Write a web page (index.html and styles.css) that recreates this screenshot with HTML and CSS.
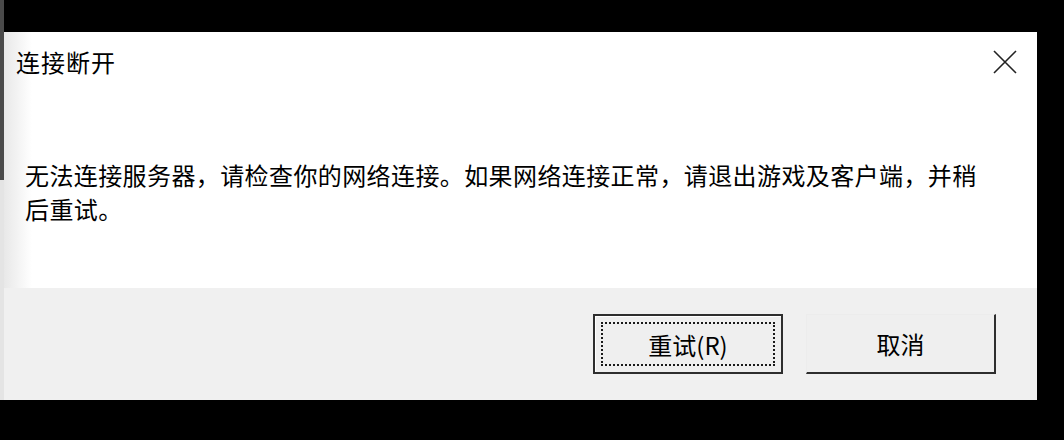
FILE: index.html
```html
<!DOCTYPE html>
<html lang="zh-CN">
<head>
  <meta charset="UTF-8">
  <meta name="viewport" content="width=device-width, initial-scale=1.0">
  <title>连接断开</title>
  <link rel="stylesheet" href="styles.css">
</head>
<body>
  <div class="stage">
    <div class="edge"></div>
    <div class="dialog">
      <div class="content">
        <div class="title-row">
          <span class="title">连接断开</span>
          <button class="close" aria-label="关闭">
            <svg width="24" height="24" viewBox="0 0 24 24">
              <path d="M1 1 L23 23 M23 1 L1 23" stroke="#222" stroke-width="1.6" fill="none"/>
            </svg>
          </button>
        </div>
        <p class="message">无法连接服务器，请检查你的网络连接。如果网络连接正常，请退出游戏及客户端，并稍后重试。</p>
      </div>
      <div class="footer">
        <button class="btn btn-default">重试(R)</button>
        <button class="btn">取消</button>
      </div>
    </div>
  </div>
</body>
</html>
```

FILE: styles.css
```css
html, body {
  margin: 0;
  background: #000;
}
body {
  width: 1064px;
  height: 440px;
  overflow: hidden;
  font-family: "Noto Sans CJK SC", "Noto Sans", sans-serif;
  color: #000;
}
.stage {
  display: flex;
  align-items: flex-start;
}
.edge {
  width: 4px;
  height: 400px;
  background: linear-gradient(to bottom, #4a4a4a 0, #4a4a4a 180px, #e4e4e4 180px);
}
.dialog {
  margin-top: 32px;
  width: 1033px;
  height: 368px;
  display: flex;
  flex-direction: column;
  background: #fff;
}
.content {
  flex: 1;
  background: linear-gradient(to right, #e8e8e8 0, #fff 28px);
}
.title-row {
  display: flex;
  justify-content: space-between;
  align-items: center;
  padding: 14px 20px 0 12px;
  height: 32px;
}
.title {
  font-size: 24px;
  line-height: 32px;
  letter-spacing: 1px;
}
.close {
  border: none;
  background: none;
  padding: 0;
  width: 24px;
  height: 24px;
  display: flex;
}
.message {
  margin: 80px 0 0 21px;
  width: 960px;
  font-size: 24px;
  line-height: 34px;
  letter-spacing: 0.4px;
}
.footer {
  height: 112px;
  box-sizing: border-box;
  background: #f0f0f0;
  display: flex;
  justify-content: flex-end;
  align-items: flex-start;
  gap: 23px;
  padding: 26px 41px 0 0;
}
.btn {
  width: 190px;
  height: 60px;
  font-family: inherit;
  font-size: 24px;
  color: #000;
  background: #efefef;
  border-style: solid;
  border-width: 1px 2px 2px 1px;
  border-color: #ececec #2e2e2e #2e2e2e #ececec;
  padding: 0;
}
.btn-default {
  border: 2px solid #2e2e2e;
  box-shadow: inset 1px 1px 0 #fff;
  outline: 2px dotted #1a1a1a;
  outline-offset: -10px;
}
```
